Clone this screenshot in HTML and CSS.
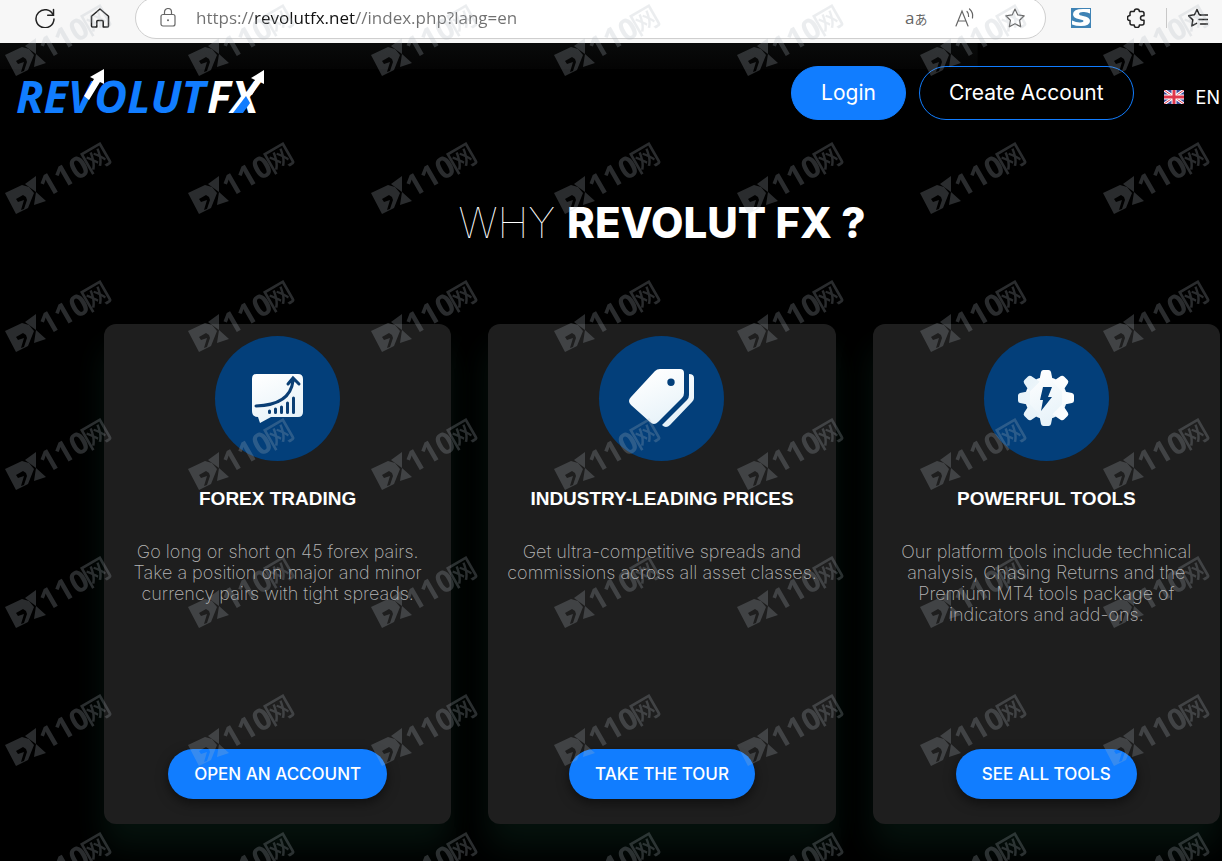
FILE: index.html
```html
<!DOCTYPE html>
<html lang="en">
<head>
    <meta charset="UTF-8">
    <meta name="viewport" content="width=device-width, initial-scale=1.0">
    <title>Revolut FX</title>
    <link rel="stylesheet" href="styles.css">
</head>
<body>
    <div class="browser-bar">
        <button class="bar-button" aria-label="Reload">
            <svg viewBox="0 0 20 20" fill="none" stroke="currentColor" stroke-width="1.5" stroke-linecap="round">
                <path d="M18.2 7A9 9 0 1 0 19 11"/>
                <path d="M18.5 1.5v5.8h-5.8"/>
            </svg>
        </button>
        <button class="bar-button home" aria-label="Home">
            <svg viewBox="0 0 20 20" fill="none" stroke="currentColor" stroke-width="1.5" stroke-linejoin="round">
                <path d="M1.5 8.3 10 1l8.500 7.300V18a1 1 0 0 1-1 1h-4.300v-5.500a1 1 0 0 0-1-1H7.800a1 1 0 0 0-1 1V19H2.500a1 1 0 0 1-1-1z"/>
            </svg>
        </button>
        <div class="address">
            <svg class="lock" viewBox="0 0 20 20" fill="none" stroke="currentColor" stroke-width="1.2">
                <rect x="3" y="6.500" width="14" height="11.500" rx="2"/>
                <path d="M6.500 6.500V4a3.500 3.500 0 0 1 7 0v2.500"/>
                <circle cx="10" cy="12.200" r="1" fill="currentColor" stroke="none"/>
            </svg>
            <input class="url" type="text" aria-label="Address" value="https://revolutfx.net//index.php?lang=en">
            <button class="bar-button translate" aria-label="Translate">a<small>あ</small></button>
            <button class="bar-button" aria-label="Read aloud">
                <svg viewBox="0 0 20 20" fill="none" stroke="currentColor" stroke-width="1.2" stroke-linecap="round">
                    <path d="M1 18 7 3l6 15M3 13h8"/>
                    <path d="M12 3.500q2 2 1.600 5M14.500 1q4 3.500 3 9"/>
                </svg>
            </button>
            <button class="bar-button" aria-label="Add to favorites">
                <svg viewBox="0 0 20 20" fill="none" stroke="currentColor" stroke-width="1.2" stroke-linejoin="round">
                    <path d="m10 1 2.800 5.900 6.400.9-4.600 4.500 1.100 6.500-5.700-3.100-5.700 3.100 1.100-6.500L.8 7.800l6.400-.9z"/>
                </svg>
            </button>
        </div>
        <button class="bar-button extension" aria-label="Extension">
            <svg viewBox="0 0 20 20">
                <rect width="20" height="20" fill="#3f83b5"/>
                <path d="M19 1v4.500q-3-1.800-7-1.500-4 .2-4 2 0 1.300 4 2 7 1.200 7 5 0 5-9 5-5 0-9-1.500v-4q4 2 8 2 3.500 0 3.500-1.400 0-1.200-4-1.900Q2 10 2 6.200 2 1 12 1z" fill="#fff"/>
            </svg>
        </button>
        <button class="bar-button" aria-label="Extensions">
            <svg viewBox="0 0 20 20" fill="none" stroke="currentColor" stroke-width="1.500" stroke-linejoin="round">
                <path d="M4 3.500h3.200a2.600 2.600 0 0 1 5.200 0H15a2 2 0 0 1 2 2v2.200h-1.200a2.300 2.300 0 0 0 0 4.600H17v2.700a2 2 0 0 1-2 2h-2.600a2.600 2.600 0 0 1-5.200 0H5a2 2 0 0 1-2-2v-2.400a2.600 2.600 0 0 1 0-5.200V5.500a2 2 0 0 1 1-2z"/>
            </svg>
        </button>
        <span class="bar-divider"></span>
        <button class="bar-button" aria-label="Favorites">
            <svg viewBox="0 0 20 20" fill="none" stroke="currentColor" stroke-width="1.500" stroke-linejoin="round" stroke-linecap="round">
                <path d="M12.500 7 11.300 6.800 9 1.500 6.500 6.800l-6 .9 4.300 4.200-1 6 4.700-2.500"/>
                <path d="M12.500 7H20M11 11.500h9M12.500 16H20"/>
            </svg>
        </button>
    </div>

    <div class="page">
        <header class="site-header">
            <a class="logo" href="#" aria-label="Revolut FX">
                <svg viewBox="0 0 248 62">
                    <text x="0" y="47" class="logo-text logo-blue">REVOLUT</text>
                    <text x="191" y="47" class="logo-text logo-white">FX</text>
                    <path d="m68 30 10-17-4-2L88 3v15l-4-2-11 18z" fill="#fff"/>
                    <path d="m217 47 13-17 4 7-7 10z" fill="#117dff"/>
                    <path d="m231 28 8-14-4-2 13-8v14l-4-2-8 13z" fill="#fff"/>
                </svg>
            </a>
            <nav class="nav">
                <a class="nav-button login" href="#">Login</a>
                <a class="nav-button create" href="#">Create Account</a>
                <a class="language" href="#">
                    <svg class="flag" viewBox="0 0 20 14">
                        <rect width="20" height="14" fill="#3b4a9c"/>
                        <path d="m0 0 20 14M20 0 0 14" stroke="#fff" stroke-width="3"/>
                        <path d="m0 0 20 14M20 0 0 14" stroke="#e0364c" stroke-width="1"/>
                        <path d="M10 0v14M0 7h20" stroke="#fff" stroke-width="5"/>
                        <path d="M10 0v14M0 7h20" stroke="#e0364c" stroke-width="3"/>
                    </svg>
                    EN
                </a>
            </nav>
        </header>

        <main class="why">
            <h1 class="why-title">WHY <strong>REVOLUT FX ?</strong></h1>

            <div class="cards">
                <section class="card">
                    <div class="card-icon">
                        <svg viewBox="0 0 125 125">
                            <path d="M41 38h42q5 0 5 5v33q0 5-5 5H56l-11 6-2-6q-6 0-6-6V43q0-5 4-5z" fill="url(#shine)"/>
                            <path d="M41 70q34-1 37-25M73 48l5-6 6 6" fill="none" stroke="#0a3e74" stroke-width="3" stroke-linecap="round"/>
                            <path d="M54.500 75v1.500M60.500 73v3.500M66.500 71v5.500M72.500 67v9.500M78.500 62v14.500" stroke="#0a3e74" stroke-width="3" stroke-linecap="round"/>
                        </svg>
                    </div>
                    <h2 class="card-title">FOREX TRADING</h2>
                    <p class="card-text">Go long or short on 45 forex pairs.<br>Take a position on major and minor<br>currency pairs with tight spreads.</p>
                    <a class="card-button" href="#">OPEN AN ACCOUNT</a>
                </section>

                <section class="card">
                    <div class="card-icon">
                        <svg viewBox="0 0 125 125">
                            <path d="M61 33h20q4 0 4 4v20q0 3-2 5L59 86q-4 4-8 0L32 69q-4-4 0-8l24-26q2-2 5-2zM72 42.500a3.700 3.700 0 1 0 0 7.400 3.700 3.700 0 0 0 0-7.400z" fill="url(#shine)" fill-rule="evenodd"/>
                            <path d="M90 38q5 0 5 4v20q0 2-2 4L71 89q-4 4-8 0l25-25q2-2 2-5z" fill="url(#shine)"/>
                        </svg>
                    </div>
                    <h2 class="card-title">INDUSTRY-LEADING PRICES</h2>
                    <p class="card-text">Get ultra-competitive spreads and<br>commissions across all asset classes.</p>
                    <a class="card-button" href="#">TAKE THE TOUR</a>
                </section>

                <section class="card">
                    <div class="card-icon">
                        <svg viewBox="0 0 125 125">
                            <g fill="url(#shine)">
                                <circle cx="62" cy="62" r="21"/>
                                <path id="tooth" d="M55 46l2-10q.5-2 2.500-2h5q2 0 2.500 2l2 10zM55 78l2 10q.5 2 2.500 2h5q2 0 2.500-2l2-10z"/>
                                <use href="#tooth" transform="rotate(45 62 62)"/>
                                <use href="#tooth" transform="rotate(90 62 62)"/>
                                <use href="#tooth" transform="rotate(135 62 62)"/>
                            </g>
                            <path d="M59 51h9l-4 10h4L57 75l2-11h-3z" fill="#033f7a"/>
                        </svg>
                    </div>
                    <h2 class="card-title">POWERFUL TOOLS</h2>
                    <p class="card-text">Our platform tools include technical<br>analysis, Chasing Returns and the<br>Premium MT4 tools package of<br>indicators and add-ons.</p>
                    <a class="card-button" href="#">SEE ALL TOOLS</a>
                </section>
            </div>
        </main>
    </div>

    <!-- repeating watermark, one tile is 183 x 138 -->
    <svg class="watermark" aria-hidden="true">
        <defs>
            <linearGradient id="shine" gradientUnits="userSpaceOnUse" x1="50" y1="35" x2="75" y2="90">
                <stop offset="0" stop-color="#fff"/>
                <stop offset="1" stop-color="#e4f1f8"/>
            </linearGradient>
            <pattern id="mark" width="183" height="138" patternUnits="userSpaceOnUse">
                <path d="M5 55 22 47l7 2 5 6-6 15-12 6zM16 61l7-4 3 2 1 3-3 9-3 1 3-10-6 2z" fill-rule="evenodd"/>
                <path d="m25 46 11-8v16zM36 54l10 9-12 4z"/>
                <text x="47" y="60" transform="rotate(-30 47 60)" class="mark-digits">110</text>
                <text x="89" y="36" transform="rotate(-30 89 36)" class="mark-han">网</text>
            </pattern>
        </defs>
        <rect width="100%" height="100%" fill="url(#mark)"/>
    </svg>
</body>
</html>
```
FILE: styles.css
```css
* {
    box-sizing: border-box;
}
body {
    font-family: Inter, "Open Sans", "Noto Sans CJK SC", sans-serif;
    margin: 0;
    min-height: 100vh;
    background: #000;
    color: #fff;
    display: flex;
    flex-direction: column;
    overflow: hidden;
}
a {
    color: inherit;
    text-decoration: none;
}
.browser-bar {
    display: flex;
    align-items: center;
    height: 43px;
    padding: 0 14px 7px 35px;
    background: #f7f7f7;
    color: #222;
}
.bar-button {
    width: 20px;
    height: 20px;
    padding: 0;
    border: none;
    background: none;
    color: inherit;
    flex-shrink: 0;
    cursor: pointer;
}
.bar-button svg {
    display: block;
    width: 20px;
    height: 20px;
}
.home {
    margin: 0 25px 0 35px;
}
.address {
    flex: 1;
    display: flex;
    align-items: center;
    gap: 30px;
    height: 42px;
    padding: 0 20px 0 22px;
    background: #fff;
    border: 1px solid #cfcfcf;
    border-radius: 21px;
    color: #666;
}
.lock {
    width: 20px;
    height: 20px;
    margin-right: -12px;
}
.url {
    flex: 1;
    min-width: 0;
    padding: 0 0 2px;
    border: none;
    outline: none;
    font-family: "Open Sans", sans-serif;
    font-size: 17px;
    color: transparent;
    /* the host name is darker than the rest of the address */
    background: linear-gradient(90deg, #707070 58px, #111 58px, #111 159px, #707070 159px);
    background-clip: text;
    -webkit-background-clip: text;
}
.translate {
    font-family: "Open Sans", "Noto Sans CJK JP", sans-serif;
    font-size: 17px;
    line-height: 18px;
    white-space: nowrap;
}
.translate small {
    font-size: 13px;
}
.extension {
    margin: 0 36px 0 25px;
}
.bar-divider {
    width: 1px;
    height: 20px;
    margin: 0 21px 0 19px;
    background: #c8c8c8;
}
.page {
    flex: 1;
    background: linear-gradient(#090a0a, #040404) no-repeat 0 0 / 80% 26px;
}
.site-header {
    display: flex;
    justify-content: space-between;
    align-items: flex-start;
    padding: 23px 2px 0 16px;
}
.logo svg {
    display: block;
    width: 248px;
    height: 62px;
    overflow: visible;
}
.logo-text {
    font-family: "Open Sans", sans-serif;
    font-size: 45px;
    font-weight: 700;
    font-style: italic;
}
.logo-blue {
    fill: #117dff;
}
.logo-white {
    fill: #fff;
}
.nav {
    display: flex;
    align-items: center;
    gap: 13px;
}
.nav-button {
    padding: 0 29px;
    border: 1px solid #117dff;
    border-radius: 27px;
    line-height: 52px;
    font-size: 21px;
}
.login {
    background: #117dff;
}
.language {
    display: flex;
    align-items: center;
    gap: 12px;
    margin-left: 17px;
    padding-top: 8px;
    font-size: 18px;
}
.flag {
    width: 20px;
    height: 14px;
}
.why {
    padding: 70px 2px 37px 104px;
}
.why-title {
    margin: 0 0 76px;
    text-align: center;
    font-size: 42px;
    line-height: 50px;
    font-weight: 100;
}
.why-title strong {
    font-weight: 800;
}
.cards {
    display: grid;
    grid-template-columns: repeat(3, 1fr);
    gap: 37px;
}
.card {
    display: flex;
    flex-direction: column;
    align-items: center;
    min-height: 500px;
    padding: 12px 10px 25px;
    background: #1e1e1e;
    border-radius: 12px;
    box-shadow: 0 24px 32px rgba(20, 70, 50, 0.25);
    text-align: center;
}
.card-icon {
    width: 125px;
    height: 125px;
    border-radius: 50%;
    background: #033f7a;
}
.card-title {
    margin: 26px 0 30px;
    font-family: "Liberation Sans", Arial, sans-serif;
    font-size: 19px;
    line-height: 24px;
    font-weight: 700;
}
.card-text {
    margin: 0;
    font-size: 18px;
    line-height: 21px;
    font-weight: 200;
    color: #b4b4b4;
    white-space: nowrap;
}
.card-button {
    margin-top: auto;
    padding: 0 26px;
    border-radius: 25px;
    background: #117dff;
    box-shadow: 0 4px 12px rgba(0, 0, 0, 0.5);
    font-size: 17px;
    line-height: 50px;
    font-weight: 500;
}
.watermark {
    position: absolute;
    inset: 0;
    width: 100%;
    height: 100%;
    pointer-events: none;
    fill: #b0b8c0;
    opacity: 0.24;
}
.mark-digits {
    font-family: "Open Sans", sans-serif;
    font-size: 30px;
    font-weight: 700;
}
.mark-han {
    font-family: "Noto Sans CJK SC", sans-serif;
    font-size: 28px;
    font-weight: 500;
}
```
